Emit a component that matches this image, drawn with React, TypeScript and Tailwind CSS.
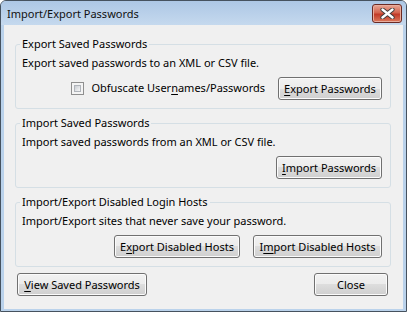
import type { ReactNode } from 'react'

const font = "font-['Noto_Sans','Open_Sans',sans-serif]"

function Button({ width, children }: { width: string; children: ReactNode }) {
  return (
    <button
      className={`${width} h-[23px] shrink-0 rounded-[3px] border border-[#707070] bg-[linear-gradient(#f2f2f2,#ebebeb_50%,#dddddd_50%,#cfcfcf)] shadow-[inset_0_0_0_1px_#fbfbfb] text-[11px] leading-none text-black`}
    >
      {children}
    </button>
  )
}

function Key({ children }: { children: ReactNode }) {
  return <span className="underline underline-offset-[2px]">{children}</span>
}

function GroupBox({ title, text, children }: { title: string; text: string; children: ReactNode }) {
  return (
    <fieldset className="rounded-[3px] border border-[#d5dfe5] pl-[6px] pr-[8px] pb-[8px]">
      <legend className="-ml-[2px] px-[2px] leading-[16px]">{title}</legend>
      <div className="mt-[3px] leading-[16px]">{text}</div>
      <div className="mt-[6px] flex h-[23px] items-center justify-end gap-[13px]">{children}</div>
    </fieldset>
  )
}

function Checkbox() {
  return (
    <span className="block h-[13px] w-[13px] border border-[#8f8f8f] bg-[#f4f4f4] p-[2px]">
      <span className="block h-full w-full border border-[#b0b4ba] bg-gradient-to-br from-[#c9cdd3] to-[#f7f7f7]" />
    </span>
  )
}

function CloseButton() {
  return (
    <div className="mt-[3px] flex h-[19px] w-[30px] items-center justify-center rounded-[3px] border border-[#6b2a24] bg-[linear-gradient(#e8a796,#d4644e_45%,#c23a28_55%,#dc7a5c)] shadow-[inset_0_0_0_1px_#e9ad9d]">
      <svg width="15" height="11" viewBox="0 0 15 11">
        <path d="M2.5 1.5 L12.5 9.5 M12.5 1.5 L2.5 9.5" stroke="#3a3a3a" strokeWidth="4.2" strokeLinecap="round" />
        <path d="M2.5 1.5 L12.5 9.5 M12.5 1.5 L2.5 9.5" stroke="#ffffff" strokeWidth="2.4" strokeLinecap="round" />
      </svg>
    </div>
  )
}

export default function App() {
  return (
    <div
      className={`${font} flex h-[312px] w-[407px] flex-col rounded-t-[6px] border border-[#46525f] bg-[#bad2eb] text-[11px] text-black`}
    >
      <div className="flex h-[24px] shrink-0 items-start justify-between rounded-t-[5px] bg-gradient-to-b from-[#adc7e5] to-[#c5d9ee] pl-[6px] pr-[4px]">
        <span className="mt-[5px] text-[11px] leading-[16px] text-[#111]">Import/Export Passwords</span>
        <CloseButton />
      </div>

      <div className="mx-[3px] mb-[2px] flex flex-1 flex-col bg-[#f0f0f0] pl-[11px] pr-[12px] pt-[11px]">
        <GroupBox title="Export Saved Passwords" text="Export saved passwords to an XML or CSV file.">
          <div className="flex items-center gap-[7px]">
            <Checkbox />
            <span>
              Obfuscate User<Key>n</Key>ames/Passwords
            </span>
          </div>
          <Button width="w-[104px]">
            <Key>E</Key>xport Passwords
          </Button>
        </GroupBox>

        <div className="mt-[6px]">
          <GroupBox title="Import Saved Passwords" text="Import saved passwords from an XML or CSV file.">
            <Button width="w-[106px]">
              <Key>I</Key>mport Passwords
            </Button>
          </GroupBox>
        </div>

        <div className="mt-[6px]">
          <GroupBox title="Import/Export Disabled Login Hosts" text="Import/Export sites that never save your password.">
            <Button width="w-[126px]">
              E<Key>x</Key>port Disabled Hosts
            </Button>
            <Button width="w-[129px]">
              I<Key>m</Key>port Disabled Hosts
            </Button>
          </GroupBox>
        </div>

        <div className="mt-[6px] flex justify-between pl-[2px] pr-[3px]">
          <Button width="w-[130px]">
            <Key>V</Key>iew Saved Passwords
          </Button>
          <Button width="w-[74px]">Close</Button>
        </div>
      </div>
    </div>
  )
}
